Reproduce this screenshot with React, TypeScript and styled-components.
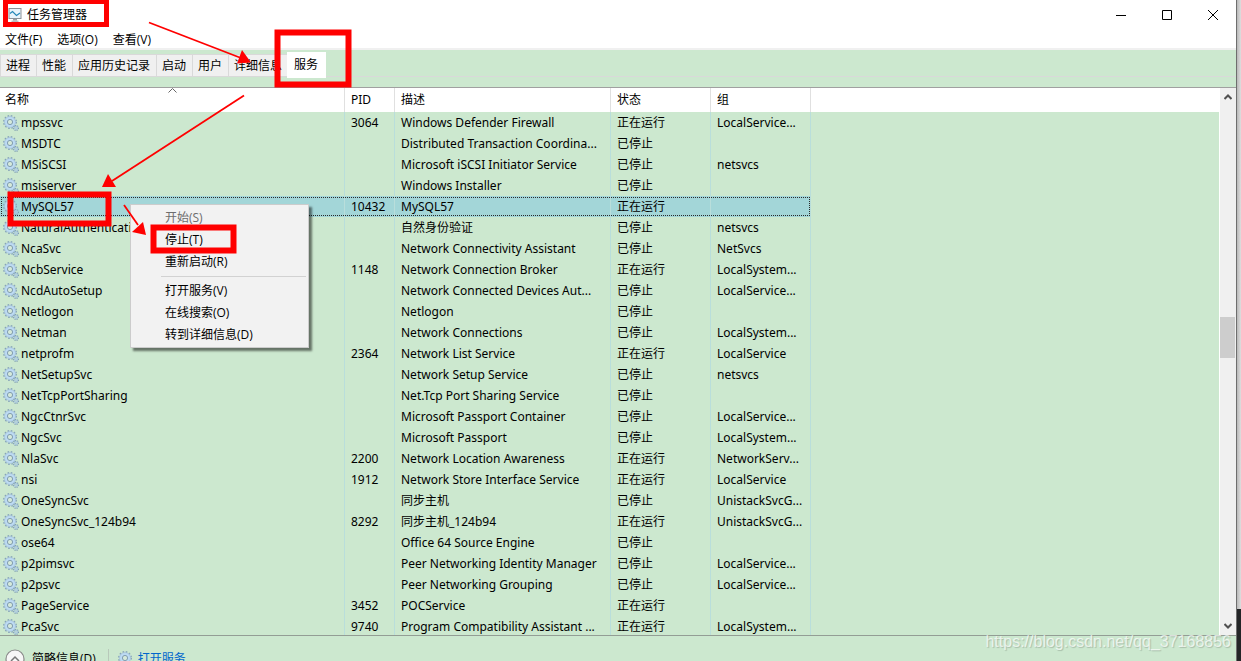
import React from "react";
import styled, { createGlobalStyle, css } from "styled-components";

const green = "#cce8cf";
const red = "#ff0000";

const GlobalStyle = createGlobalStyle`
  * { box-sizing: border-box; }
  body {
    margin: 0;
    overflow: hidden;
    background: ${green};
    color: #000;
    font: 12px/20px "Open Sans", "Noto Sans CJK SC", sans-serif;
  }
  button { font: inherit; color: inherit; border: 0; padding: 0; background: none; }
`;

const Desktop = styled.div`
  position: relative;
  display: flex;
  height: 100vh;
  overflow: hidden;
`;

const Window = styled.main`
  flex: 1;
  min-width: 0;
  display: flex;
  flex-direction: column;
  border-right: 1px solid #6e6e6e;
`;

const Behind = styled.div`
  flex: 0 0 4px;
  display: flex;
  flex-direction: column;
  background: linear-gradient(to right, #b9b9b9, #dedede);
  &::after {
    content: "";
    height: 52px;
    margin-top: auto;
    background: #232527;
  }
`;

const TitleBar = styled.header`
  display: flex;
  align-items: center;
  height: 29px;
  background: #fff;
`;

const Title = styled.h1`
  display: flex;
  align-items: center;
  gap: 5px;
  margin: 0;
  padding-left: 8px;
  font-size: 12px;
  font-weight: 400;
`;

const Controls = styled.div`
  display: flex;
  margin-left: auto;
`;

const ControlButton = styled.button`
  display: grid;
  place-items: center;
  width: 46px;
  height: 28px;
`;

const MenuBar = styled.nav`
  display: flex;
  gap: 15px;
  height: 21px;
  padding: 1px 0 0 5px;
  background: #fff;
  border-bottom: 2px solid #f0f0f0;
`;

const TabBar = styled.div`
  display: flex;
  align-items: flex-end;
  height: 27px;
  border-bottom: 1px solid #d9d9d9;
`;

const Tab = styled.button<{ $active?: boolean }>`
  height: 22px;
  padding: 0 6px 0 5px;
  border: solid #d9d9d9;
  border-width: 1px 0 0 1px;
  background: #f0f0f0;
  ${(p) =>
    p.$active &&
    css`
      height: 26px;
      margin: 0 0 -2px -1px;
      padding: 0 8px 2px 6px;
      border-color: #fff;
      background: #fff;
    `}
`;

const ListArea = styled.section`
  flex: 1;
  min-height: 0;
  display: flex;
  margin-top: 10px;
  border-top: 1px solid #a0a0a0;
  border-bottom: 1px solid #939d95;
`;

const ListBody = styled.div`
  flex: 1;
  min-width: 0;
  overflow: hidden;
  background: linear-gradient(#fff 24px, ${green} 24px);
  border-right: 1px solid #fff;
`;

const Table = styled.table`
  width: 811px;
  table-layout: fixed;
  border-collapse: separate;
  border-spacing: 0;
  font-family: "Noto Sans", "Noto Sans CJK SC", sans-serif;
`;

const Col = styled.col<{ $w: number }>`
  width: ${(p) => p.$w}px;
`;

const HeadCell = styled.th`
  position: relative;
  height: 24px;
  padding: 0 0 0 6px;
  border-right: 1px solid #e0e0e0;
  font-weight: 400;
  text-align: left;
  &:first-child { padding-left: 5px; }
`;

const SortMark = styled.svg`
  position: absolute;
  top: 0;
  left: calc(50% - 4px);
`;

const Row = styled.tr<{ $selected?: boolean }>`
  ${(p) =>
    p.$selected &&
    css`
      background: #a3d6d8;
      outline: 1px dotted #2b2b2b;
      outline-offset: -2px;
    `}
`;

const Cell = styled.td`
  height: 21px;
  padding: 0 0 0 6px;
  border-right: 1px solid #b9dedb;
  white-space: nowrap;
  &:first-child { padding-left: 3px; }
`;

const Name = styled.span`
  display: flex;
  align-items: center;
  gap: 2px;
`;

const ScrollBar = styled.div`
  flex: 0 0 16px;
  display: flex;
  flex-direction: column;
  background: #f0f0f0;
`;

const ScrollButton = styled.button`
  display: grid;
  place-items: center;
  height: 18px;
`;

const Track = styled.div`
  flex: 1;
  display: flex;
  flex-direction: column;
`;

const Before = styled.div`
  flex: 211 0 0;
`;

const Thumb = styled.div`
  flex: 41 0 0;
  margin-right: 1px;
  background: #cdcdcd;
`;

const After = styled.div`
  flex: 259 0 0;
`;

const Footer = styled.footer`
  flex: 0 0 25px;
  display: flex;
  align-items: flex-start;
  padding: 13px 0 0 5px;
  overflow: hidden;
`;

const Expander = styled.button`
  display: flex;
  align-items: center;
  gap: 7px;
  height: 20px;
  padding-right: 12px;
`;

const ServicesLink = styled.a`
  display: flex;
  align-items: center;
  gap: 4px;
  height: 20px;
  padding-left: 9px;
  border-left: 1px solid #b8c9ba;
  color: #0066cc;
  text-decoration: none;
`;

const ContextMenu = styled.div`
  position: absolute;
  top: 204px;
  left: 130px;
  width: 179px;
  padding: 2px 2px 1px;
  border: 1px solid #cccccc;
  background: #f2f2f2;
  box-shadow: 3px 3px 2px rgba(0, 0, 0, 0.5);
`;

const MenuItem = styled.button`
  display: block;
  width: 100%;
  height: 22px;
  padding-left: 32px;
  text-align: left;
  &:disabled { color: #6d6d6d; }
`;

const Separator = styled.hr`
  margin: 3px 0 3px 28px;
  border: 0;
  border-top: 1px solid #d2d2d2;
`;

const Marks = styled.svg`
  position: absolute;
  top: 0;
  left: 0;
  pointer-events: none;
`;

const Watermark = styled.div`
  position: absolute;
  right: 10px;
  bottom: 9px;
  color: rgba(255, 255, 255, 0.7);
  font: 16px/20px "Liberation Sans", sans-serif;
  text-shadow: 1px 1px 1px rgba(0, 0, 0, 0.18);
`;

const GearIcon = () => (
  <svg width="16" height="16" viewBox="0 0 16 16" fill="none" aria-hidden="true">
    <circle cx="7" cy="7" r="6.2" stroke="#86a3b8" strokeWidth="1.5" strokeDasharray="1.6 1.65" />
    <circle cx="7" cy="7" r="4.2" stroke="#bcdaf3" strokeWidth="2.8" />
    <circle cx="7" cy="7" r="5.5" stroke="#9dbcd3" strokeWidth="0.6" />
    <circle cx="7" cy="7" r="2.6" fill="#d6ead9" stroke="#809cb3" strokeWidth="1" />
    <circle cx="13" cy="13" r="2.4" stroke="#7c9ab2" strokeWidth="1.3" strokeDasharray="1 0.88" />
    <circle cx="13" cy="13" r="1.4" stroke="#a5c4de" strokeWidth="1.2" />
  </svg>
);

const MonitorIcon = () => (
  <svg width="14" height="14" viewBox="0 0 14 14" fill="none" aria-hidden="true">
    <rect x="1" y="0.5" width="12" height="10" fill="#e8f4fb" stroke="#8b9299" />
    <path d="M2 5.5 4.5 3.5 8.5 7.5 12 5" stroke="#2487b8" strokeWidth="1.2" />
    <path d="M5 11h4v1.5H5z" fill="#9aa0a5" />
    <path d="M3.5 13.2h7" stroke="#9aa0a5" />
  </svg>
);

type Service = [name: string, pid: string, text: string, running: boolean, group: string];

const services: Service[] = [
  ["mpssvc", "3064", "Windows Defender Firewall", true, "LocalService..."],
  ["MSDTC", "", "Distributed Transaction Coordina...", false, ""],
  ["MSiSCSI", "", "Microsoft iSCSI Initiator Service", false, "netsvcs"],
  ["msiserver", "", "Windows Installer", false, ""],
  ["MySQL57", "10432", "MySQL57", true, ""],
  ["NaturalAuthentication", "", "自然身份验证", false, "netsvcs"],
  ["NcaSvc", "", "Network Connectivity Assistant", false, "NetSvcs"],
  ["NcbService", "1148", "Network Connection Broker", true, "LocalSystem..."],
  ["NcdAutoSetup", "", "Network Connected Devices Aut...", false, "LocalService..."],
  ["Netlogon", "", "Netlogon", false, ""],
  ["Netman", "", "Network Connections", false, "LocalSystem..."],
  ["netprofm", "2364", "Network List Service", true, "LocalService"],
  ["NetSetupSvc", "", "Network Setup Service", false, "netsvcs"],
  ["NetTcpPortSharing", "", "Net.Tcp Port Sharing Service", false, ""],
  ["NgcCtnrSvc", "", "Microsoft Passport Container", false, "LocalService..."],
  ["NgcSvc", "", "Microsoft Passport", false, "LocalSystem..."],
  ["NlaSvc", "2200", "Network Location Awareness", true, "NetworkServ..."],
  ["nsi", "1912", "Network Store Interface Service", true, "LocalService"],
  ["OneSyncSvc", "", "同步主机", false, "UnistackSvcG..."],
  ["OneSyncSvc_124b94", "8292", "同步主机_124b94", true, "UnistackSvcG..."],
  ["ose64", "", "Office 64 Source Engine", false, ""],
  ["p2pimsvc", "", "Peer Networking Identity Manager", false, "LocalService..."],
  ["p2psvc", "", "Peer Networking Grouping", false, "LocalService..."],
  ["PageService", "3452", "POCService", true, ""],
  ["PcaSvc", "9740", "Program Compatibility Assistant ...", true, "LocalSystem..."],
];

const tabs = ["进程", "性能", "应用历史记录", "启动", "用户", "详细信息", "服务"];

export default function App() {
  return (
    <Desktop>
      <GlobalStyle />
      <Window>
        <TitleBar>
          <Title>
            <MonitorIcon />
            任务管理器
          </Title>
          <Controls>
            <ControlButton aria-label="最小化">
              <svg width="10" height="10" stroke="#000"><path d="M0 5.5h10" /></svg>
            </ControlButton>
            <ControlButton aria-label="最大化">
              <svg width="10" height="10" stroke="#000" fill="none"><path d="M.5.5h9v9h-9z" /></svg>
            </ControlButton>
            <ControlButton aria-label="关闭">
              <svg width="10" height="10" stroke="#000"><path d="M0 0l10 10M10 0L0 10" /></svg>
            </ControlButton>
          </Controls>
        </TitleBar>
        <MenuBar>
          <button>文件(F)</button>
          <button>选项(O)</button>
          <button>查看(V)</button>
        </MenuBar>
        <TabBar role="tablist">
          {tabs.map((tab) => (
            <Tab key={tab} role="tab" aria-selected={tab === "服务"} $active={tab === "服务"}>
              {tab}
            </Tab>
          ))}
        </TabBar>
        <ListArea>
          <ListBody>
            <Table>
              <colgroup>
                <Col $w={345} />
                <Col $w={50} />
                <Col $w={216} />
                <Col $w={100} />
                <Col $w={100} />
              </colgroup>
              <thead>
                <tr>
                  <HeadCell>
                    名称
                    <SortMark width="9" height="5" fill="none" stroke="#666">
                      <path d="M.5 4.5l4-4 4 4" />
                    </SortMark>
                  </HeadCell>
                  <HeadCell>PID</HeadCell>
                  <HeadCell>描述</HeadCell>
                  <HeadCell>状态</HeadCell>
                  <HeadCell>组</HeadCell>
                </tr>
              </thead>
              <tbody>
                {services.map(([name, pid, text, running, group]) => (
                  <Row key={name} $selected={name === "MySQL57"}>
                    <Cell>
                      <Name>
                        <GearIcon />
                        {name}
                      </Name>
                    </Cell>
                    <Cell>{pid}</Cell>
                    <Cell>{text}</Cell>
                    <Cell>{running ? "正在运行" : "已停止"}</Cell>
                    <Cell>{group}</Cell>
                  </Row>
                ))}
              </tbody>
            </Table>
          </ListBody>
          <ScrollBar>
            <ScrollButton aria-label="向上滚动">
              <svg width="8" height="6" fill="none" stroke="#505050" strokeWidth="2"><path d="M.5 5L4 1.5 7.5 5" /></svg>
            </ScrollButton>
            <Track>
              <Before />
              <Thumb />
              <After />
            </Track>
            <ScrollButton aria-label="向下滚动">
              <svg width="8" height="6" fill="none" stroke="#505050" strokeWidth="2"><path d="M.5 1L4 4.5 7.5 1" /></svg>
            </ScrollButton>
          </ScrollBar>
        </ListArea>
        <Footer>
          <Expander>
            <svg width="20" height="20" fill="none">
              <circle cx="10" cy="10" r="9" fill="#f7f7f7" stroke="#8a8a8a" strokeWidth="1.2" />
              <path d="M6 12l4-4 4 4" stroke="#777" strokeWidth="1.5" />
            </svg>
            简略信息(D)
          </Expander>
          <ServicesLink href="#services">
            <GearIcon />
            打开服务
          </ServicesLink>
        </Footer>
      </Window>
      <Behind />
      <ContextMenu role="menu">
        <MenuItem role="menuitem" disabled>开始(S)</MenuItem>
        <MenuItem role="menuitem">停止(T)</MenuItem>
        <MenuItem role="menuitem">重新启动(R)</MenuItem>
        <Separator />
        <MenuItem role="menuitem">打开服务(V)</MenuItem>
        <MenuItem role="menuitem">在线搜索(O)</MenuItem>
        <MenuItem role="menuitem">转到详细信息(D)</MenuItem>
      </ContextMenu>
      <Marks width="360" height="260" fill="none" stroke={red} aria-hidden="true">
        <rect x="5.5" y="1.5" width="101" height="23" strokeWidth="5" />
        <rect x="277.5" y="32.5" width="71" height="52" strokeWidth="6" />
        <rect x="10.5" y="194.5" width="98" height="29" strokeWidth="6" />
        <rect x="153.5" y="227.5" width="80" height="23" strokeWidth="6" />
        <g strokeWidth="1.8">
          <path d="M149 22.5L241 58" />
          <path d="M244 95.5L112 181" />
          <path d="M124 205L138 225" />
        </g>
        <g fill={red} stroke="none">
          <path d="M251 62.5L237 63.5L242 50Z" />
          <path d="M102 187L108 174L116 187Z" />
          <path d="M146 235L132 232L143 222Z" />
        </g>
      </Marks>
      <Watermark>https://blog.csdn.net/qq_37168856</Watermark>
    </Desktop>
  );
}
